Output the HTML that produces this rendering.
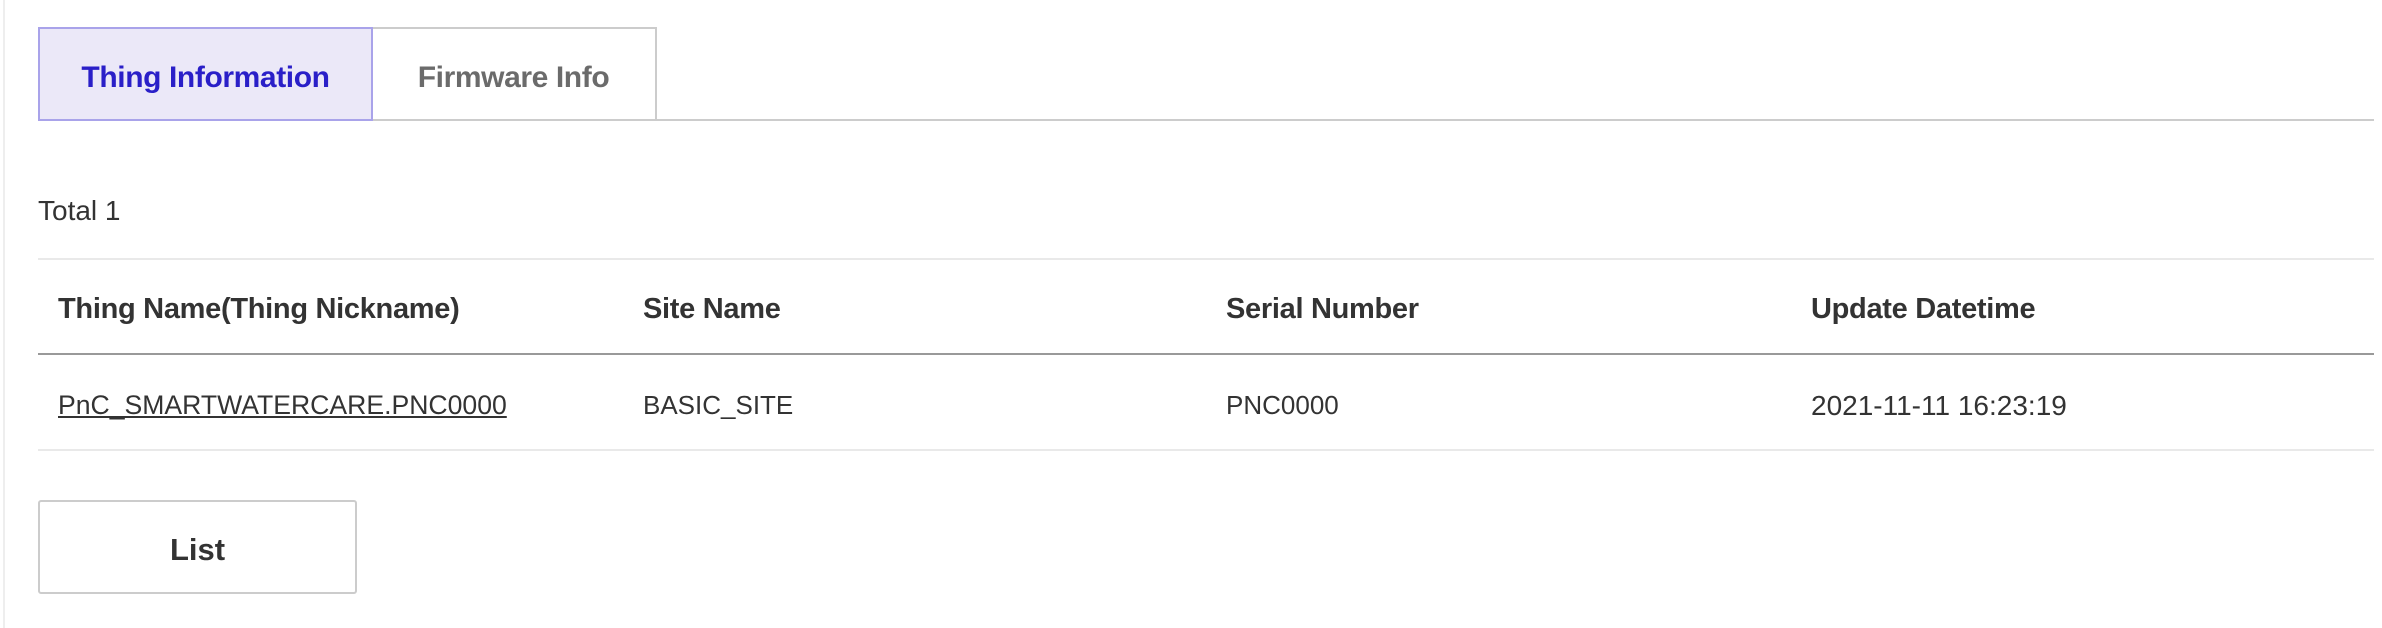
<!DOCTYPE html>
<html><head><meta charset="utf-8"><style>
html,body{margin:0;padding:0;background:#fff;width:2382px;height:628px;overflow:hidden;font-family:"Liberation Sans",sans-serif;color:#333;}
.abs{position:absolute;}
.vl{left:3px;top:0;width:2px;height:628px;background:#eee;}
.tab{top:27px;height:94px;display:flex;align-items:center;justify-content:center;font-weight:bold;font-size:30px;letter-spacing:-0.4px;box-sizing:border-box;padding-top:8px;}
.t1{left:38px;width:335px;background:#ebe8f8;border:2px solid #a9a3ea;color:#2a1fc8;z-index:2;}
.t2{left:372px;width:285px;border:2px solid #ccc;color:#6b6b6b;border-left:none;}
.tl{left:656px;top:119px;width:1718px;height:2px;background:#ccc;}
.txt{font-size:28px;white-space:nowrap;}
.hd{font-weight:bold;font-size:29px;letter-spacing:-0.3px;white-space:nowrap;}
.line{left:38px;width:2336px;height:2px;}
.btn{left:38px;top:500px;width:319px;height:94px;border:2px solid #ccc;border-radius:3px;box-sizing:border-box;display:flex;align-items:center;justify-content:center;font-size:31px;font-weight:bold;color:#333;padding-top:6px;}
</style></head><body>
<div class="abs vl"></div>
<div class="abs tab t1">Thing Information</div>
<div class="abs tab t2">Firmware Info</div>
<div class="abs tl"></div>
<div class="abs txt" style="left:38px;top:195px;">Total 1</div>
<div class="abs line" style="top:258px;background:#e9e9e9;"></div>
<div class="abs hd" style="left:58px;top:293px;">Thing Name(Thing Nickname)</div>
<div class="abs hd" style="left:643px;top:293px;">Site Name</div>
<div class="abs hd" style="left:1226px;top:293px;">Serial Number</div>
<div class="abs hd" style="left:1811px;top:293px;">Update Datetime</div>
<div class="abs line" style="top:353px;background:#999;"></div>
<div class="abs txt" style="left:58px;top:390px;text-decoration:underline;font-size:26.6px;">PnC_SMARTWATERCARE.PNC0000</div>
<div class="abs txt" style="left:643px;top:390px;font-size:26px;">BASIC_SITE</div>
<div class="abs txt" style="left:1226px;top:390px;font-size:26px;">PNC0000</div>
<div class="abs txt" style="left:1811px;top:390px;">2021-11-11 16:23:19</div>
<div class="abs line" style="top:449px;background:#e9e9e9;"></div>
<div class="abs btn">List</div>
</body></html>
